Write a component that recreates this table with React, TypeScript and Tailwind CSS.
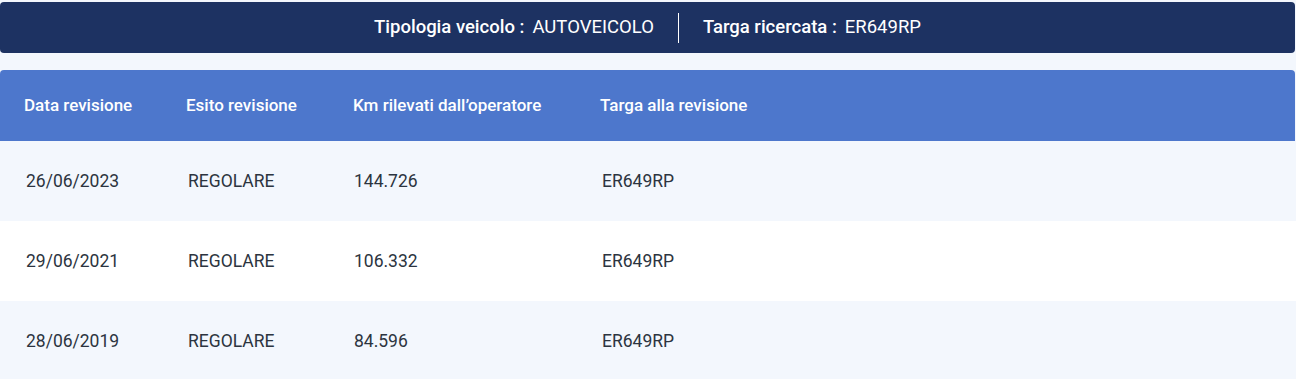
import React from "react";

const rows = [
  { data: "26/06/2023", esito: "REGOLARE", km: "144.726", targa: "ER649RP" },
  { data: "29/06/2021", esito: "REGOLARE", km: "106.332", targa: "ER649RP" },
  { data: "28/06/2019", esito: "REGOLARE", km: "84.596", targa: "ER649RP" },
];

export default function App() {
  return (
    <div
      className="w-[1296px] h-[379px] overflow-hidden bg-[#f3f7fd] pt-[2px]"
      style={{ fontFamily: "Roboto, 'Liberation Sans', sans-serif" }}
    >
      <div className="mr-[1px] h-[51px] rounded-[4px] bg-[#1d3262] flex items-center justify-center text-white text-[18.5px]">
        <span className="font-medium">Tipologia veicolo :</span>
        <span className="ml-[8px]">AUTOVEICOLO</span>
        <span className="mx-[24px] w-px h-[30px] bg-white"></span>
        <span className="font-medium">Targa ricercata :</span>
        <span className="ml-[8px]">ER649RP</span>
      </div>
      <div className="mt-[17px]">
        <div className="mr-[1px] h-[71px] rounded-t-[4px] bg-[#4d77cc] grid grid-cols-[162px_167px_247px_1fr] items-center text-white text-[17px] font-medium">
          <div className="pl-[24px]">Data revisione</div>
          <div className="pl-[24px]">Esito revisione</div>
          <div className="pl-[24px]">Km rilevati dall’operatore</div>
          <div className="pl-[24px]">Targa alla revisione</div>
        </div>
        {rows.map((r, i) => (
          <div
            key={i}
            className={`h-[80px] grid grid-cols-[162px_167px_247px_1fr] items-center text-[17.5px] text-[#2c3440] ${
              i % 2 === 0 ? "bg-[#f3f7fd]" : "bg-white"
            }`}
          >
            <div className="pl-[26px]">{r.data}</div>
            <div className="pl-[26px]">{r.esito}</div>
            <div className="pl-[25px]">{r.km}</div>
            <div className="pl-[26px]">{r.targa}</div>
          </div>
        ))}
      </div>
    </div>
  );
}
